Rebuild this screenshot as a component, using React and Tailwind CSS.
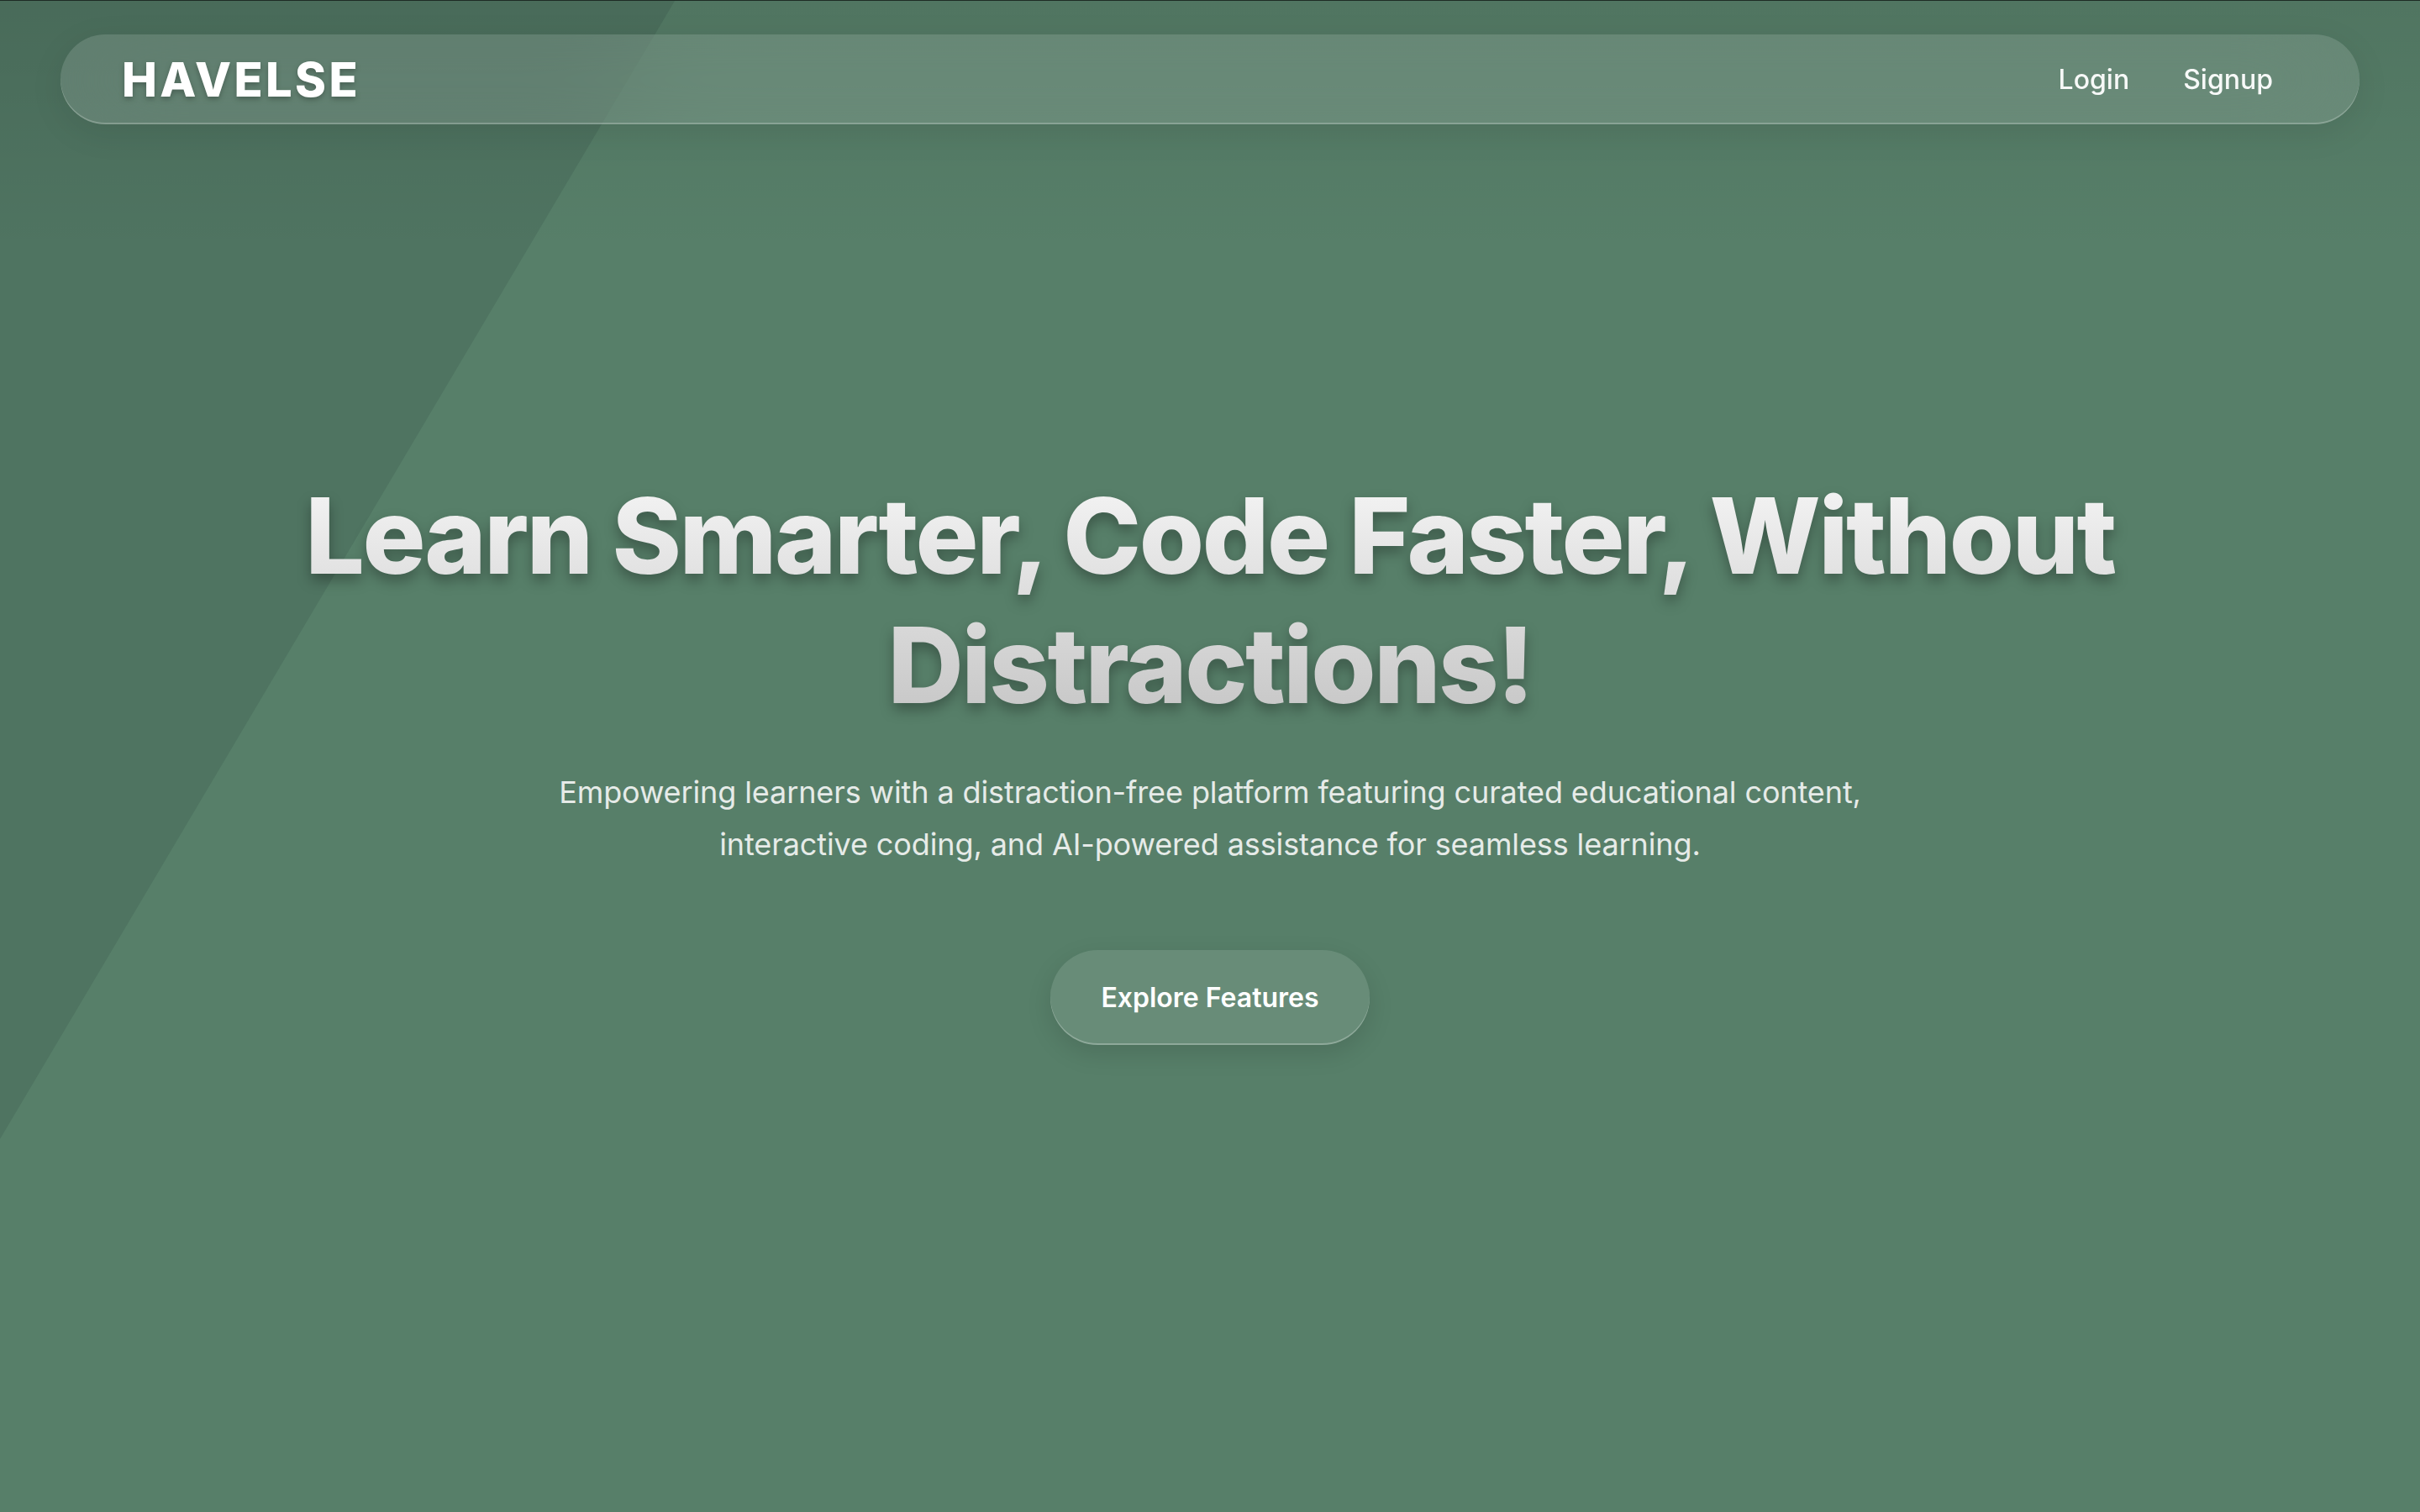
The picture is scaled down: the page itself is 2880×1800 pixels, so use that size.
import React from 'react';

const Navbar = () => {
  return (
    <nav className="mx-[72px] mt-[40px] h-[107px] flex items-center justify-between rounded-full bg-white/13 backdrop-blur-3xl pl-[73px] pr-[71px] shadow-[inset_0_-2px_0_rgba(255,255,255,0.22),0_10px_40px_rgba(0,0,0,0.08)]">
      <a href="#" className="text-[56px] font-extrabold tracking-[0.06em] text-white drop-shadow-[0_3px_3px_rgba(0,0,0,0.25)]">
        HAVELSE
      </a>
      <div className="flex items-center">
        <a href="#" className="px-8 text-[32px] font-medium text-white/95">Login</a>
        <a href="#" className="px-8 text-[32px] font-medium text-white/95">Signup</a>
      </div>
    </nav>
  );
};

const App = () => {
  return (
    <div className="relative min-h-screen overflow-hidden border-t border-[#1e2b24] bg-[#577f69] font-['Inter','Noto_Sans',sans-serif]">
      {/* background shapes */}
      <div className="absolute inset-0 bg-[#4f7461] [clip-path:polygon(0_0,803px_0,0_1355px)]" />
      <div className="absolute inset-x-0 top-0 h-[300px] bg-linear-to-b from-black/8 to-transparent" />

      <div className="relative">
        <Navbar />

        {/* Hero */}
        <section className="flex flex-col items-center text-center pt-[413px]">
          <h1 className="max-w-[2300px] text-[125px] leading-[154px] font-extrabold tracking-[-0.02em] bg-linear-to-b from-[#f6f6f6] to-[#c4c4c4] bg-clip-text text-transparent drop-shadow-[0_8px_8px_rgba(0,0,0,0.3)]">
            Learn Smarter, Code Faster, Without Distractions!
          </h1>
          <p className="mt-[43px] max-w-[1600px] text-[36px] leading-[62px] tracking-[-0.003em] text-[#e6ebe8]">
            Empowering learners with a distraction-free platform featuring curated educational content,
            interactive coding, and AI-powered assistance for seamless learning.
          </p>
          <button className="mt-[95px] h-[113px] w-[380px] rounded-full bg-white/10 text-[32px] font-semibold text-white shadow-[inset_0_-2px_0_rgba(255,255,255,0.25),0_10px_30px_rgba(0,0,0,0.12)]">
            Explore Features
          </button>
        </section>
      </div>
    </div>
  );
};

export default App;
